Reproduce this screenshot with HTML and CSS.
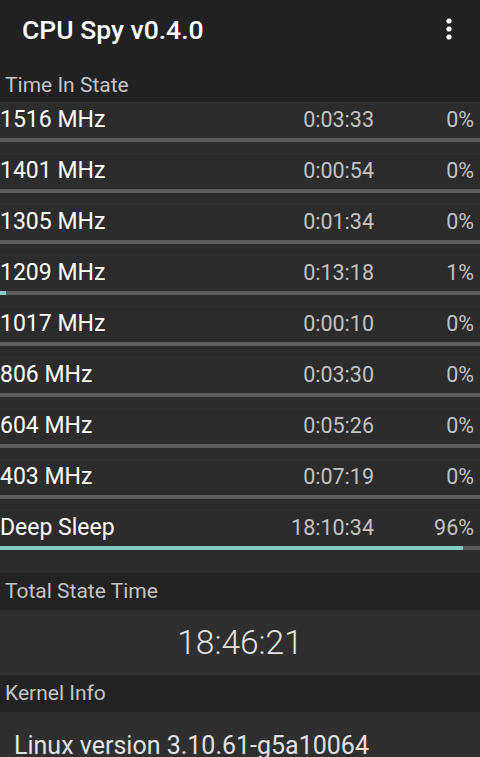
FILE: index.html
```html
<!DOCTYPE html>
<html lang="en">
<head>
  <meta charset="UTF-8">
  <meta name="viewport" content="width=device-width, initial-scale=1">
  <title>CPU Spy</title>
  <link rel="stylesheet" href="styles.css">
</head>
<body>
  <header class="appbar">
    <h1 class="title">CPU Spy v0.4.0</h1>
    <svg class="menu" width="8" height="24" viewBox="0 0 8 24">
      <circle cx="4" cy="4" r="2.6" fill="#fff"/>
      <circle cx="4" cy="12" r="2.6" fill="#fff"/>
      <circle cx="4" cy="20" r="2.6" fill="#fff"/>
    </svg>
  </header>

  <div class="section-title first">Time In State</div>
  <div class="states">
    <div class="row">
      <div class="row-main"><span class="freq">1516 MHz</span><span class="time">0:03:33</span><span class="pct">0%</span></div>
      <div class="bar"><div class="fill" style="width: 0%"></div></div>
    </div>
    <div class="row">
      <div class="row-main"><span class="freq">1401 MHz</span><span class="time">0:00:54</span><span class="pct">0%</span></div>
      <div class="bar"><div class="fill" style="width: 0%"></div></div>
    </div>
    <div class="row">
      <div class="row-main"><span class="freq">1305 MHz</span><span class="time">0:01:34</span><span class="pct">0%</span></div>
      <div class="bar"><div class="fill" style="width: 0%"></div></div>
    </div>
    <div class="row">
      <div class="row-main"><span class="freq">1209 MHz</span><span class="time">0:13:18</span><span class="pct">1%</span></div>
      <div class="bar"><div class="fill" style="width: 1.2%"></div></div>
    </div>
    <div class="row">
      <div class="row-main"><span class="freq">1017 MHz</span><span class="time">0:00:10</span><span class="pct">0%</span></div>
      <div class="bar"><div class="fill" style="width: 0%"></div></div>
    </div>
    <div class="row">
      <div class="row-main"><span class="freq">806 MHz</span><span class="time">0:03:30</span><span class="pct">0%</span></div>
      <div class="bar"><div class="fill" style="width: 0%"></div></div>
    </div>
    <div class="row">
      <div class="row-main"><span class="freq">604 MHz</span><span class="time">0:05:26</span><span class="pct">0%</span></div>
      <div class="bar"><div class="fill" style="width: 0%"></div></div>
    </div>
    <div class="row">
      <div class="row-main"><span class="freq">403 MHz</span><span class="time">0:07:19</span><span class="pct">0%</span></div>
      <div class="bar"><div class="fill" style="width: 0%"></div></div>
    </div>
    <div class="row">
      <div class="row-main"><span class="freq">Deep Sleep</span><span class="time">18:10:34</span><span class="pct">96%</span></div>
      <div class="bar"><div class="fill" style="width: 96.4%"></div></div>
    </div>
  </div>

  <div class="section-title">Total State Time</div>
  <div class="total">18:46:21</div>

  <div class="section-title">Kernel Info</div>
  <div class="kernel">Linux version 3.10.61-g5a10064</div>
</body>
</html>
```

FILE: styles.css
```css
body {
  margin: 0;
  background-color: #2c2c2c;
  font-family: Roboto, "Noto Sans", sans-serif;
  color: #fff;
  overflow: hidden;
}

.appbar {
  height: 58px;
  background-color: #212121;
  display: flex;
  align-items: center;
  justify-content: space-between;
  padding: 0 27px 0 22px;
}

.title {
  margin: 0;
  font-size: 26.5px;
  font-weight: 500;
  color: #fff;
}

.menu {
  display: block;
}

.section-title {
  height: 37px;
  line-height: 37px;
  padding-left: 5px;
  background-color: #222;
  color: #c4c4c4;
  font-size: 21px;
}

.section-title.first {
  height: 34px;
  line-height: 34px;
  padding-top: 10px;
  background-color: #212121;
}

.states {
  padding-bottom: 12px;
  background-color: #2a2a2a;
}

.row {
  height: 51px;
  box-sizing: border-box;
  padding-top: 1px;
  border-top: 1px solid #313131;
  background-color: #2c2c2c;
}

.row-main {
  display: flex;
  align-items: center;
  height: 30px;
  padding-right: 6px;
}

.freq {
  flex: 1;
  font-size: 23px;
  color: #fff;
}

.time {
  font-size: 21.5px;
  color: #c2c2c2;
  text-align: right;
}

.pct {
  width: 100px;
  font-size: 21.5px;
  color: #c2c2c2;
  text-align: right;
}

.bar {
  height: 4px;
  margin-top: 4px;
  background-color: #5c5c5c;
}

.fill {
  height: 100%;
  background-color: #80cbc4;
}

.total {
  height: 65px;
  line-height: 65px;
  background-color: #2f2f2f;
  text-align: center;
  font-size: 33.5px;
  font-weight: 300;
  color: #e2e2e2;
}

.kernel {
  height: 60px;
  padding: 19px 14px 0;
  background-color: #2f2f2f;
  font-size: 25px;
  color: #e2e2e2;
}
```
